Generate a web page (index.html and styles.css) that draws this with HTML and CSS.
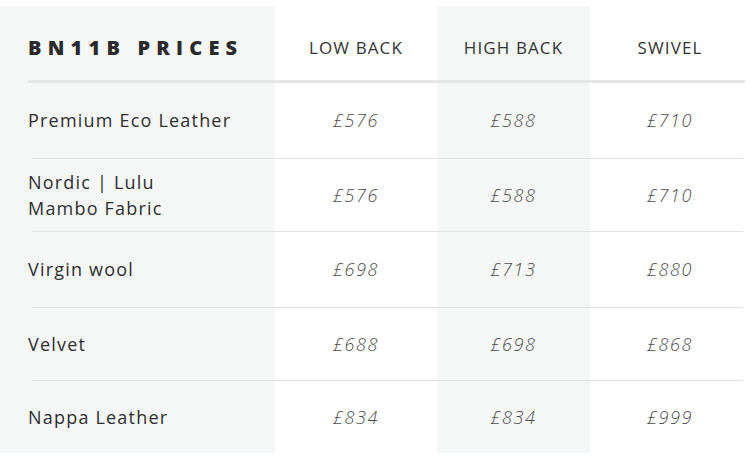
FILE: index.html
```html
<!DOCTYPE html>
<html>
<head>
<meta charset="utf-8">
<link rel="stylesheet" href="styles.css">
</head>
<body>
<div class="table">
  <div class="row head">
    <div class="name title">BN11B PRICES</div>
    <div class="col">LOW BACK</div>
    <div class="col">HIGH BACK</div>
    <div class="col">SWIVEL</div>
  </div>
  <div class="rule thick"></div>
  <div class="row r1">
    <div class="name">Premium Eco Leather</div>
    <div class="price">£576</div>
    <div class="price">£588</div>
    <div class="price">£710</div>
  </div>
  <div class="rule"></div>
  <div class="row r2">
    <div class="name">Nordic | Lulu<br>Mambo Fabric</div>
    <div class="price">£576</div>
    <div class="price">£588</div>
    <div class="price">£710</div>
  </div>
  <div class="rule"></div>
  <div class="row r1">
    <div class="name">Virgin wool</div>
    <div class="price">£698</div>
    <div class="price">£713</div>
    <div class="price">£880</div>
  </div>
  <div class="rule"></div>
  <div class="row r2">
    <div class="name">Velvet</div>
    <div class="price">£688</div>
    <div class="price">£698</div>
    <div class="price">£868</div>
  </div>
  <div class="rule"></div>
  <div class="row r5">
    <div class="name">Nappa Leather</div>
    <div class="price">£834</div>
    <div class="price">£834</div>
    <div class="price">£999</div>
  </div>
</div>
</body>
</html>
```
FILE: styles.css
```css
html, body {
  margin: 0;
  padding: 0;
  background: #ffffff;
}
body {
  font-family: "Open Sans", "DejaVu Sans", sans-serif;
  color: #2e2e2e;
}
.table {
  margin-top: 6px;
  width: 750px;
  height: 447px;
  background: linear-gradient(to right,
    #f5f6f6 0, #f5f6f6 275px,
    #ffffff 275px, #ffffff 437px,
    #f5f6f6 437px, #f5f6f6 590px,
    #ffffff 590px);
}
.row {
  display: grid;
  grid-template-columns: 275px 162px 153px 160px;
  align-items: center;
  box-sizing: border-box;
}
.head { height: 74px; padding-top: 9px; }
.r1 { height: 75px; padding-bottom: 2px; }
.r2 { height: 72px; }
.r5 { height: 71px; }
.name {
  padding-left: 28px;
  font-size: 18px;
  letter-spacing: 1.2px;
  line-height: 26px;
  color: #2e2e2e;
}
.title {
  font-weight: 800;
  font-size: 20px;
  letter-spacing: 6.2px;
  color: #2a2a2a;
}
.col {
  text-align: center;
  font-size: 17px;
  letter-spacing: 1.1px;
  color: #333333;
}
.price {
  text-align: center;
  font-size: 18px;
  font-style: italic;
  font-weight: 300;
  letter-spacing: 1.5px;
  color: #4d4d4d;
}
.rule {
  height: 1px;
  margin-left: 32px;
  margin-right: 7px;
  background: #e2e2e2;
}
.rule.thick {
  height: 3px;
  margin-left: 28px;
  margin-right: 5px;
  background: #e6e6e6;
}
```
